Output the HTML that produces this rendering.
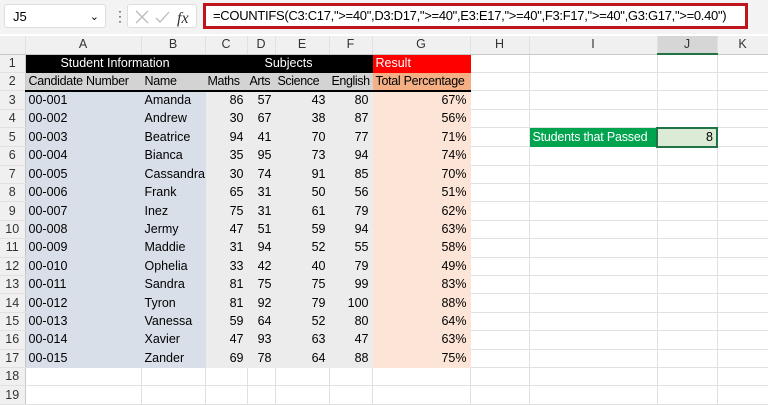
<!DOCTYPE html>
<html><head><meta charset="utf-8"><style>
body{margin:0;width:768px;height:403px;overflow:hidden;background:#fff;font-family:"Liberation Sans",sans-serif;position:relative}
.top{position:absolute;left:0;top:0;width:768px;height:34px;background:#f3f3f3}
.nb{position:absolute;left:4px;top:4px;width:102px;height:24px;background:#fff;border:1px solid #ddd;border-radius:3px;font-size:13px;line-height:24px;box-sizing:border-box;padding-left:8px}
.fx{position:absolute;left:127px;top:4px;width:70px;height:24px;background:#fff;border:1px solid #ddd;border-radius:3px;box-sizing:border-box}
.fb{position:absolute;left:203px;top:3px;width:545px;height:26px;background:#fff;border:3px solid #c0151d;box-sizing:border-box;font-size:13px;line-height:20px;padding-left:7px;white-space:nowrap;overflow:hidden;letter-spacing:-0.3px}
table{position:absolute;left:0;top:36px;width:768px;border-collapse:collapse;table-layout:fixed;font-size:12.5px}
td{height:18.4px;padding:0 3px;border-right:1px solid #e1e1e1;border-bottom:1px solid #e1e1e1;white-space:nowrap;overflow:hidden;box-sizing:border-box;line-height:17px}
tr.h td{background:#f0f0f0;text-align:center;color:#333;height:18px;border-bottom:1px solid #c8c8c8}
td.rh{background:#f0f0f0;text-align:center;color:#333;border-right:1px solid #c8c8c8;padding:0}
.a{background:#d8dfe8;border-color:#d8dfe8}
.c{background:#ececec;border-color:#ececec;text-align:right}
.g{background:#fce4d6;border-color:#fce4d6;text-align:right}
.k1{background:#000;color:#fff;text-align:center;border-color:#000}
.r1{background:#f00;color:#fff;border-color:#f00}
.k2{background:#d3d3d3;border-color:#d3d3d3;border-bottom:2px solid #000;letter-spacing:-0.3px}
.o2{background:#f4b084;border-color:#f4b084;border-bottom:2px solid #000;letter-spacing:-0.3px}
.sp{background:#00a44f;color:#fff;border-color:#00a44f;letter-spacing:-0.2px}
.j5{background:#dcebd6;border:2px solid #217346;text-align:right}
.s{letter-spacing:-0.4px;padding:0 2px}
</style></head><body>
<div class="top">
<div class="nb">J5<span style="position:absolute;right:6px;font-size:11px">&#8964;</span></div>
<div style="position:absolute;left:113px;top:8px;color:#555;font-size:14px">&#8942;</div>
<div class="fx"><svg width="70" height="24"><path d="M8 6l12 12M20 6L8 18" stroke="#bbb" stroke-width="1.3" fill="none"/><path d="M28 13l4 4 9-10" stroke="#bbb" stroke-width="1.3" fill="none"/><text x="49" y="18" font-family="Liberation Serif" font-style="italic" font-size="16" fill="#333">fx</text></svg></div>
<div class="fb">=COUNTIFS(C3:C17,"&gt;=40",D3:D17,"&gt;=40",E3:E17,"&gt;=40",F3:F17,"&gt;=40",G3:G17,"&gt;=0.40")</div>
</div>
<table>
<colgroup><col style="width:25px"><col style="width:116px"><col style="width:64px"><col style="width:42px"><col style="width:28px"><col style="width:54px"><col style="width:43px"><col style="width:98px"><col style="width:59px"><col style="width:128px"><col style="width:60px"><col style="width:51px"></colgroup>
<tr class="h"><td></td><td>A</td><td>B</td><td>C</td><td>D</td><td>E</td><td>F</td><td>G</td><td>H</td><td>I</td><td style="background:#d6d6d6;border-bottom:2px solid #217346">J</td><td>K</td></tr>
<tr><td class="rh">1</td><td class="k1" colspan="2">Student Information</td><td class="k1" colspan="4">Subjects</td><td class="r1">Result</td><td></td><td></td><td></td><td></td></tr>
<tr><td class="rh">2</td><td class="k2">Candidate Number</td><td class="k2">Name</td><td class="k2 s">Maths</td><td class="k2 s">Arts</td><td class="k2 s">Science</td><td class="k2 s">English</td><td class="o2">Total Percentage</td><td></td><td></td><td></td><td></td></tr>
<tr><td class="rh">3</td><td class="a">00-001</td><td class="a">Amanda</td><td class="c">86</td><td class="c">57</td><td class="c">43</td><td class="c">80</td><td class="g">67%</td><td></td><td></td><td></td><td></td></tr>
<tr><td class="rh">4</td><td class="a">00-002</td><td class="a">Andrew</td><td class="c">30</td><td class="c">67</td><td class="c">38</td><td class="c">87</td><td class="g">56%</td><td></td><td></td><td></td><td></td></tr>
<tr><td class="rh">5</td><td class="a">00-003</td><td class="a">Beatrice</td><td class="c">94</td><td class="c">41</td><td class="c">70</td><td class="c">77</td><td class="g">71%</td><td></td><td class="sp">Students that Passed</td><td class="j5">8</td><td></td></tr>
<tr><td class="rh">6</td><td class="a">00-004</td><td class="a">Bianca</td><td class="c">35</td><td class="c">95</td><td class="c">73</td><td class="c">94</td><td class="g">74%</td><td></td><td></td><td></td><td></td></tr>
<tr><td class="rh">7</td><td class="a">00-005</td><td class="a">Cassandra</td><td class="c">30</td><td class="c">74</td><td class="c">91</td><td class="c">85</td><td class="g">70%</td><td></td><td></td><td></td><td></td></tr>
<tr><td class="rh">8</td><td class="a">00-006</td><td class="a">Frank</td><td class="c">65</td><td class="c">31</td><td class="c">50</td><td class="c">56</td><td class="g">51%</td><td></td><td></td><td></td><td></td></tr>
<tr><td class="rh">9</td><td class="a">00-007</td><td class="a">Inez</td><td class="c">75</td><td class="c">31</td><td class="c">61</td><td class="c">79</td><td class="g">62%</td><td></td><td></td><td></td><td></td></tr>
<tr><td class="rh">10</td><td class="a">00-008</td><td class="a">Jermy</td><td class="c">47</td><td class="c">51</td><td class="c">59</td><td class="c">94</td><td class="g">63%</td><td></td><td></td><td></td><td></td></tr>
<tr><td class="rh">11</td><td class="a">00-009</td><td class="a">Maddie</td><td class="c">31</td><td class="c">94</td><td class="c">52</td><td class="c">55</td><td class="g">58%</td><td></td><td></td><td></td><td></td></tr>
<tr><td class="rh">12</td><td class="a">00-010</td><td class="a">Ophelia</td><td class="c">33</td><td class="c">42</td><td class="c">40</td><td class="c">79</td><td class="g">49%</td><td></td><td></td><td></td><td></td></tr>
<tr><td class="rh">13</td><td class="a">00-011</td><td class="a">Sandra</td><td class="c">81</td><td class="c">75</td><td class="c">75</td><td class="c">99</td><td class="g">83%</td><td></td><td></td><td></td><td></td></tr>
<tr><td class="rh">14</td><td class="a">00-012</td><td class="a">Tyron</td><td class="c">81</td><td class="c">92</td><td class="c">79</td><td class="c">100</td><td class="g">88%</td><td></td><td></td><td></td><td></td></tr>
<tr><td class="rh">15</td><td class="a">00-013</td><td class="a">Vanessa</td><td class="c">59</td><td class="c">64</td><td class="c">52</td><td class="c">80</td><td class="g">64%</td><td></td><td></td><td></td><td></td></tr>
<tr><td class="rh">16</td><td class="a">00-014</td><td class="a">Xavier</td><td class="c">47</td><td class="c">93</td><td class="c">63</td><td class="c">47</td><td class="g">63%</td><td></td><td></td><td></td><td></td></tr>
<tr><td class="rh">17</td><td class="a">00-015</td><td class="a">Zander</td><td class="c">69</td><td class="c">78</td><td class="c">64</td><td class="c">88</td><td class="g">75%</td><td></td><td></td><td></td><td></td></tr>
<tr><td class="rh">18</td><td></td><td></td><td></td><td></td><td></td><td></td><td></td><td></td><td></td><td></td><td></td></tr>
<tr><td class="rh">19</td><td></td><td></td><td></td><td></td><td></td><td></td><td></td><td></td><td></td><td></td><td></td></tr>
</table>
</body></html>
